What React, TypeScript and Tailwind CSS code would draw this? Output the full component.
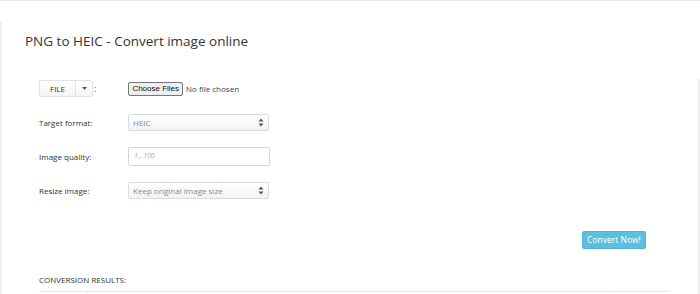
import React from "react";

const font = { fontFamily: '"Open Sans", "Liberation Sans", sans-serif' };

function Caret() {
  return (
    <svg width="6" height="9" viewBox="0 0 6 9" className="text-gray-600">
      <path d="M3 0.5 L5.5 3.5 H0.5 Z" fill="currentColor" />
      <path d="M3 8.5 L5.5 5.5 H0.5 Z" fill="currentColor" />
    </svg>
  );
}

function Select({ value }: { value: string }) {
  return (
    <div className="w-[141px] h-[17px] flex items-center justify-between px-[4px] border border-[#dcdcdc] rounded-[2px] bg-gradient-to-b from-white to-[#f3f3f3] text-[8px] text-[#888]">
      <span>{value}</span>
      <Caret />
    </div>
  );
}

export default function App() {
  return (
    <div className="w-[700px] h-[294px] bg-white overflow-hidden relative" style={font}>
      <div className="h-[1px] bg-[#e3eef2]" />
      <div className="flex">
        <div className="w-[2px] mt-[21px] h-[280px] bg-[#eef0f1]" />
        <div className="flex-1">
          <h1 className="ml-[23px] mt-[30px] text-[13.5px] leading-[20px] text-[#333]">
            PNG to HEIC - Convert image online
          </h1>

          <div className="ml-[37px] mt-[29px] flex items-center h-[17px]">
            <div className="flex w-[54px] h-[17px] border border-[#e3e3e3] rounded-[2px] bg-gradient-to-b from-white to-[#f5f5f5] text-[8px] text-[#333]">
              <span className="w-[36px] flex items-center justify-center border-r border-[#e3e3e3]">FILE</span>
              <span className="flex-1 flex items-center justify-center">
                <svg width="5" height="3" viewBox="0 0 5 3"><path d="M0 0 H5 L2.5 3 Z" fill="#555" /></svg>
              </span>
            </div>
            <span className="ml-[1px] text-[9px] text-[#555]">:</span>
            <div className="ml-[32px] flex items-center" style={{ fontFamily: '"Liberation Sans", Arial, sans-serif' }}>
              <span className="h-[14px] px-[3px] flex items-center border border-[#767676] rounded-[2px] bg-[#efefef] text-[#111] text-[8px]">Choose Files</span>
              <span className="ml-[3px] text-[#444] text-[8px]" style={font}>No file chosen</span>
            </div>
          </div>

          <div className="ml-[37px] mt-[17px] flex items-center">
            <span className="w-[89px] text-[8px] text-[#333]">Target format:</span>
            <Select value="HEIC" />
          </div>

          <div className="ml-[37px] mt-[16px] flex items-center">
            <span className="w-[89px] text-[8px] text-[#333]">Image quality:</span>
            <div className="w-[142px] h-[19px] flex items-center px-[5px] border border-[#d6d6d6] rounded-[2px] bg-white text-[7px] italic text-[#aaa]">
              1...100
            </div>
          </div>

          <div className="ml-[37px] mt-[16px] flex items-center">
            <span className="w-[89px] text-[8px] text-[#333]">Resize image:</span>
            <Select value="Keep original image size" />
          </div>

          <div className="flex justify-end mr-[52px] mt-[32px]">
            <button className="w-[64px] h-[18px] rounded-[2px] bg-[#5bc0de] border border-[#4fb6d4] text-white text-[8.5px] leading-none">
              Convert Now!
            </button>
          </div>

          <div className="ml-[37px] mt-[25px] text-[8px] text-[#333]">CONVERSION RESULTS:</div>
          <div className="ml-[37px] mt-[5px] mr-[30px] flex h-[10px] border-t border-[#e5e5e5]">
            <div className="w-[49px] border-r border-[#eee]" />
            <div className="flex-1 border-r border-[#eee]" />
            <div className="w-[57px]" />
          </div>
        </div>
        <div className="w-[2px] mt-[78px] h-[216px] bg-[#eef0f1]" />
      </div>
    </div>
  );
}
